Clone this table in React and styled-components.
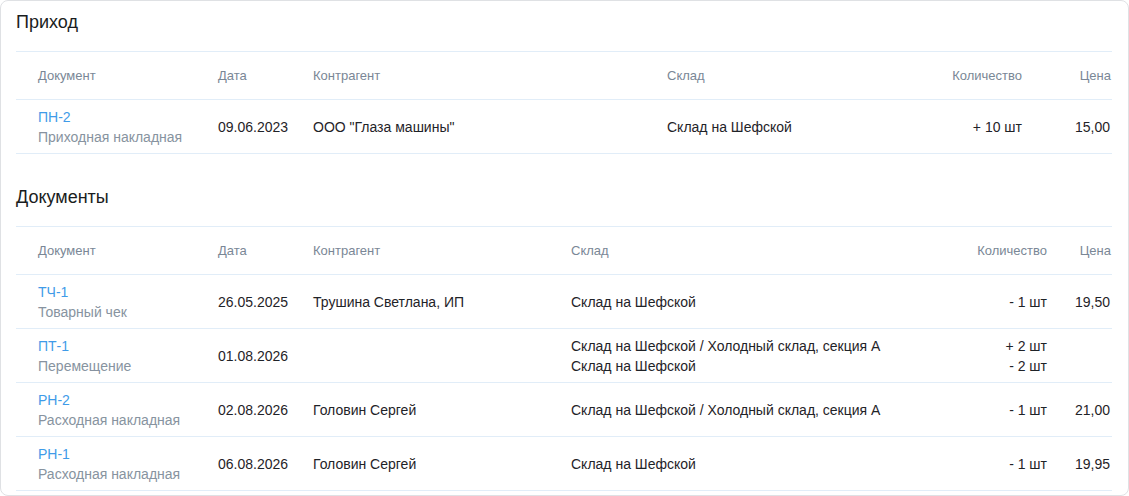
import React from "react";
import styled, { createGlobalStyle } from "styled-components";

const Global = createGlobalStyle`
  html, body { margin: 0; padding: 0; background: #ffffff; }
  body { font-family: "Liberation Sans", Arial, sans-serif; color: #1f2328; }
  * { box-sizing: border-box; }
`;

const Card = styled.div`
  width: 1129px;
  height: 496px;
  border: 1px solid #dfe1e4;
  border-radius: 8px;
  padding: 0 15px 4px;
  background: #fff;
  overflow: hidden;
`;

const Section = styled.section`
  margin-top: ${(p) => (p.$first ? "0" : "22px")};
`;

const Title = styled.h2`
  margin: 0;
  padding: 11px 0 19px;
  font-size: 18px;
  line-height: 20px;
  font-weight: 400;
  color: #1a1d21;
`;

const Scroller = styled.div`
  width: 1096px;
  overflow: hidden;
`;

const Table = styled.table`
  width: 1096px;
  border-collapse: collapse;
  table-layout: fixed;
  font-size: 14px;
`;

const Col = styled.col`
  width: ${(p) => p.$w}px;
`;

const HeadRow = styled.tr`
  height: 48px;
  border-top: 1px solid #e1edf8;
  border-bottom: 1px solid #e1edf8;
`;

const Th = styled.th`
  padding: 0 ${(p) => (p.$last ? "1px" : "16px")} 0 ${(p) => (p.$first ? "22px" : p.$last ? "4px" : "16px")};
  font-size: 13px;
  font-weight: 400;
  color: #7a8796;
  text-align: ${(p) => (p.$right ? "right" : "left")};
  white-space: nowrap;
  overflow: hidden;
`;

const Row = styled.tr`
  height: 54px;
  border-bottom: 1px solid #e1edf8;
`;

const Td = styled.td`
  padding: 6px ${(p) => (p.$last ? "2px" : "16px")} 6px ${(p) => (p.$first ? "22px" : p.$last ? "4px" : "16px")};
  line-height: 20px;
  color: #1f2328;
  text-align: ${(p) => (p.$right ? "right" : "left")};
  vertical-align: middle;
  white-space: nowrap;
`;

const DocLink = styled.a`
  display: block;
  color: #3f9be8;
  text-decoration: none;
`;

const DocType = styled.div`
  color: #8793a0;
`;

const Line = styled.div``;

const incoming = [
  {
    num: "ПН-2",
    type: "Приходная накладная",
    date: "09.06.2023",
    agent: 'ООО "Глаза машины"',
    stores: ["Склад на Шефской"],
    qty: ["+ 10 шт"],
    price: "15,00",
  },
];

const documents = [
  {
    num: "ТЧ-1",
    type: "Товарный чек",
    date: "26.05.2025",
    agent: "Трушина Светлана, ИП",
    stores: ["Склад на Шефской"],
    qty: ["- 1 шт"],
    price: "19,50",
  },
  {
    num: "ПТ-1",
    type: "Перемещение",
    date: "01.08.2026",
    agent: "",
    stores: ["Склад на Шефской / Холодный склад, секция А", "Склад на Шефской"],
    qty: ["+ 2 шт", "- 2 шт"],
    price: "",
  },
  {
    num: "РН-2",
    type: "Расходная накладная",
    date: "02.08.2026",
    agent: "Головин Сергей",
    stores: ["Склад на Шефской / Холодный склад, секция А"],
    qty: ["- 1 шт"],
    price: "21,00",
  },
  {
    num: "РН-1",
    type: "Расходная накладная",
    date: "06.08.2026",
    agent: "Головин Сергей",
    stores: ["Склад на Шефской"],
    qty: ["- 1 шт"],
    price: "19,95",
  },
];

function DocTable({ title, rows, widths, first }) {
  return (
    <Section $first={first}>
      <Title>{title}</Title>
      <Scroller>
        <Table>
          <colgroup>
            {widths.map((w, i) => (
              <Col key={i} $w={w} />
            ))}
          </colgroup>
          <thead>
            <HeadRow>
              <Th $first>Документ</Th>
              <Th>Дата</Th>
              <Th>Контрагент</Th>
              <Th>Склад</Th>
              <Th $right>Количество</Th>
              <Th $right $last>Цена</Th>
            </HeadRow>
          </thead>
          <tbody>
            {rows.map((r) => (
              <Row key={r.num}>
                <Td $first>
                  <DocLink href="#">{r.num}</DocLink>
                  <DocType>{r.type}</DocType>
                </Td>
                <Td>{r.date}</Td>
                <Td>{r.agent}</Td>
                <Td>
                  {r.stores.map((s, i) => (
                    <Line key={i}>{s}</Line>
                  ))}
                </Td>
                <Td $right>
                  {r.qty.map((q, i) => (
                    <Line key={i}>{q}</Line>
                  ))}
                </Td>
                <Td $right $last>{r.price}</Td>
              </Row>
            ))}
          </tbody>
        </Table>
      </Scroller>
    </Section>
  );
}

export default function App() {
  return (
    <>
      <Global />
      <Card>
        <DocTable
          first
          title="Приход"
          rows={incoming}
          widths={[186, 95, 354, 247, 140, 74]}
        />
        <DocTable
          title="Документы"
          rows={documents}
          widths={[186, 95, 258, 368, 140, 49]}
        />
      </Card>
    </>
  );
}
